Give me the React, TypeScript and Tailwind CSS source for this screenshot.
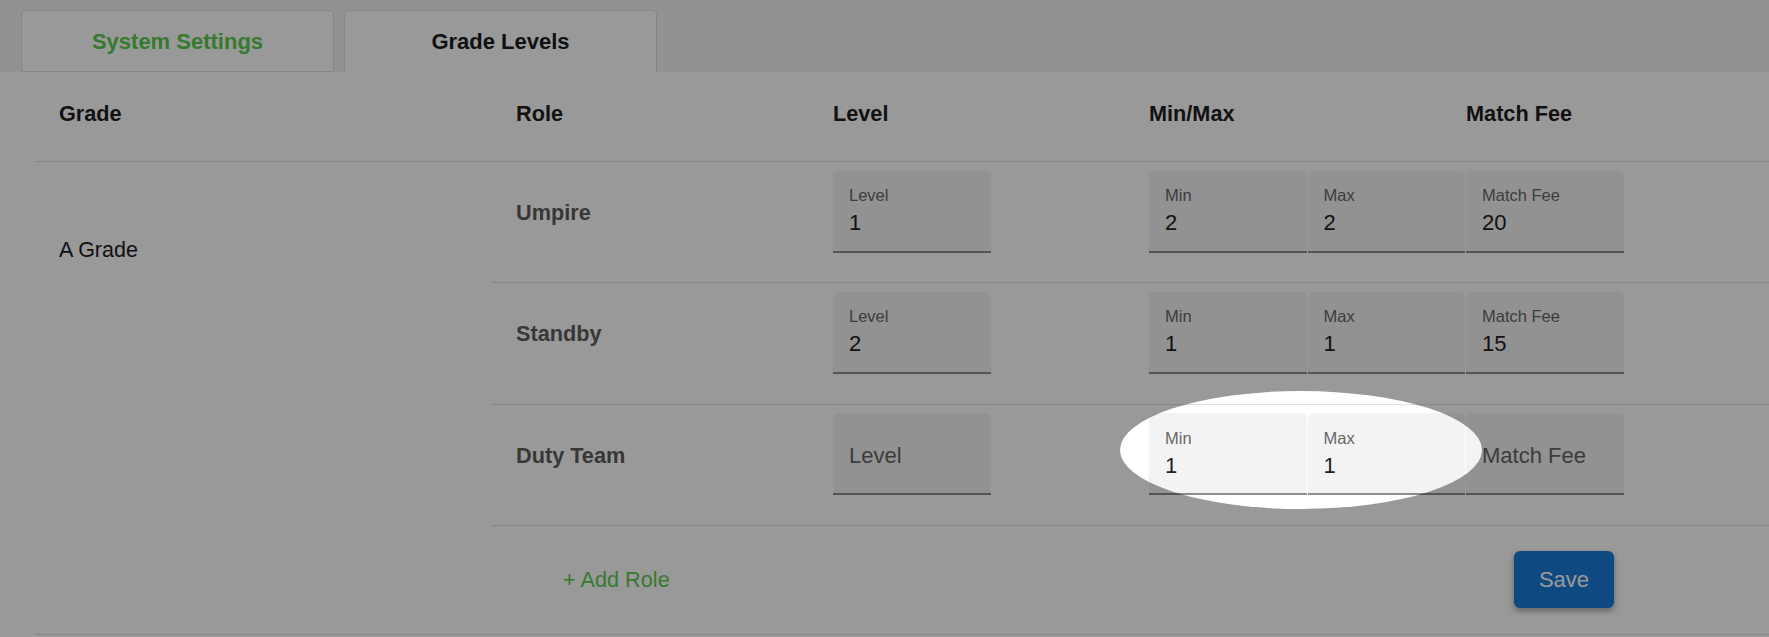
import React from "react";

type FieldProps = { label: string; value?: string };

function Field({ label, value }: FieldProps) {
  if (value === undefined || value === "") {
    return (
      <div className="w-[157.5px] h-[82px] shrink-0 bg-[#f3f3f3] rounded-t-[5.5px] border-b-2 border-[#8c8c8c] pl-[16px] pt-[31.5px]">
        <div className="text-[22px] leading-[22px] text-[#666666]">{label}</div>
      </div>
    );
  }
  return (
    <div className="w-[157.5px] h-[82px] shrink-0 bg-[#f3f3f3] rounded-t-[5.5px] border-b-2 border-[#8c8c8c] pl-[16px] pt-[16.5px]">
      <div className="text-[16.5px] leading-[16.5px] text-[#666666]">{label}</div>
      <div className="mt-[8.5px] text-[22px] leading-[22px] text-[#212121]">{value}</div>
    </div>
  );
}

type Row = { role: string; level?: string; min?: string; max?: string; fee?: string };

const rows: Row[] = [
  { role: "Umpire", level: "1", min: "2", max: "2", fee: "20" },
  { role: "Standby", level: "2", min: "1", max: "1", fee: "15" },
  { role: "Duty Team", level: "", min: "1", max: "1", fee: "" },
];

export default function App() {
  return (
    <div className="relative w-full h-[637px] overflow-hidden bg-white font-['Liberation_Sans',Arial,sans-serif]">
      {/* Tabs */}
      <div className="h-[72px] bg-[#f3f3f3] flex items-end pl-[21px] gap-[10px]">
        <div className="w-[313px] h-[62px] bg-white border border-[#dedede] rounded-t-[5px] flex items-center justify-center text-[22px] font-bold text-[#5acb4c]">
          System Settings
        </div>
        <div className="w-[313px] h-[62px] bg-white border-x border-t border-[#dedede] rounded-t-[5px] flex items-center justify-center text-[22px] font-bold text-[#1c1c1c]">
          Grade Levels
        </div>
      </div>

      {/* Table */}
      <div className="ml-[36px]">
        {/* Header */}
        <div className="flex h-[90px] pt-[31px] border-b border-[#e0e0e0] text-[21.7px] leading-[22px] font-bold text-[#1d1d1d]">
          <div className="w-[456px] pl-[23px]">Grade</div>
          <div className="w-[317px] pl-[24px]">Role</div>
          <div className="w-[316px] pl-[24px]">Level</div>
          <div className="w-[317px] pl-[24px]">Min/Max</div>
          <div className="pl-[24px]">Match Fee</div>
        </div>

        {/* Body */}
        <div className="flex border-b border-[#e0e0e0]">
          <div className="w-[456px] shrink-0 pl-[23px] pt-[77px] text-[21.5px] leading-[22px] text-[#1c1c1c]">
            A Grade
          </div>
          <div className="flex-1 flex flex-col">
            {rows.map((r) => (
              <div key={r.role} className="flex h-[121.3px] pt-[8.7px] border-b border-[#e0e0e0]">
                <div className="w-[317px] shrink-0 pl-[24px] pt-[3px] h-[82px] flex items-center text-[21.7px] font-bold text-[#5c5c5c]">
                  {r.role}
                </div>
                <div className="w-[316px] shrink-0 pl-[24px]">
                  <Field label="Level" value={r.level} />
                </div>
                <div className="pl-[24px] flex gap-[1px]">
                  <Field label="Min" value={r.min} />
                  <Field label="Max" value={r.max} />
                  <Field label="Match Fee" value={r.fee} />
                </div>
              </div>
            ))}
            <div className="flex items-center h-[108px]">
              <div className="w-[950px] shrink-0 pl-[71px] text-[21.7px] text-[#5acb4c]">+ Add Role</div>
              <div className="pl-[72px]">
                <button className="w-[100px] h-[57px] rounded-[6px] bg-[#1a7bd8] text-white text-[22px] shadow-[0_3px_6px_rgba(0,0,0,0.35)]">
                  Save
                </button>
              </div>
            </div>
          </div>
        </div>
      </div>

      {/* Spotlight overlay */}
      <div className="pointer-events-none absolute left-[1120px] top-[391px] w-[362px] h-[118px] rounded-[50%] shadow-[0_0_0_9999px_rgba(0,0,0,0.4)]" />
    </div>
  );
}
